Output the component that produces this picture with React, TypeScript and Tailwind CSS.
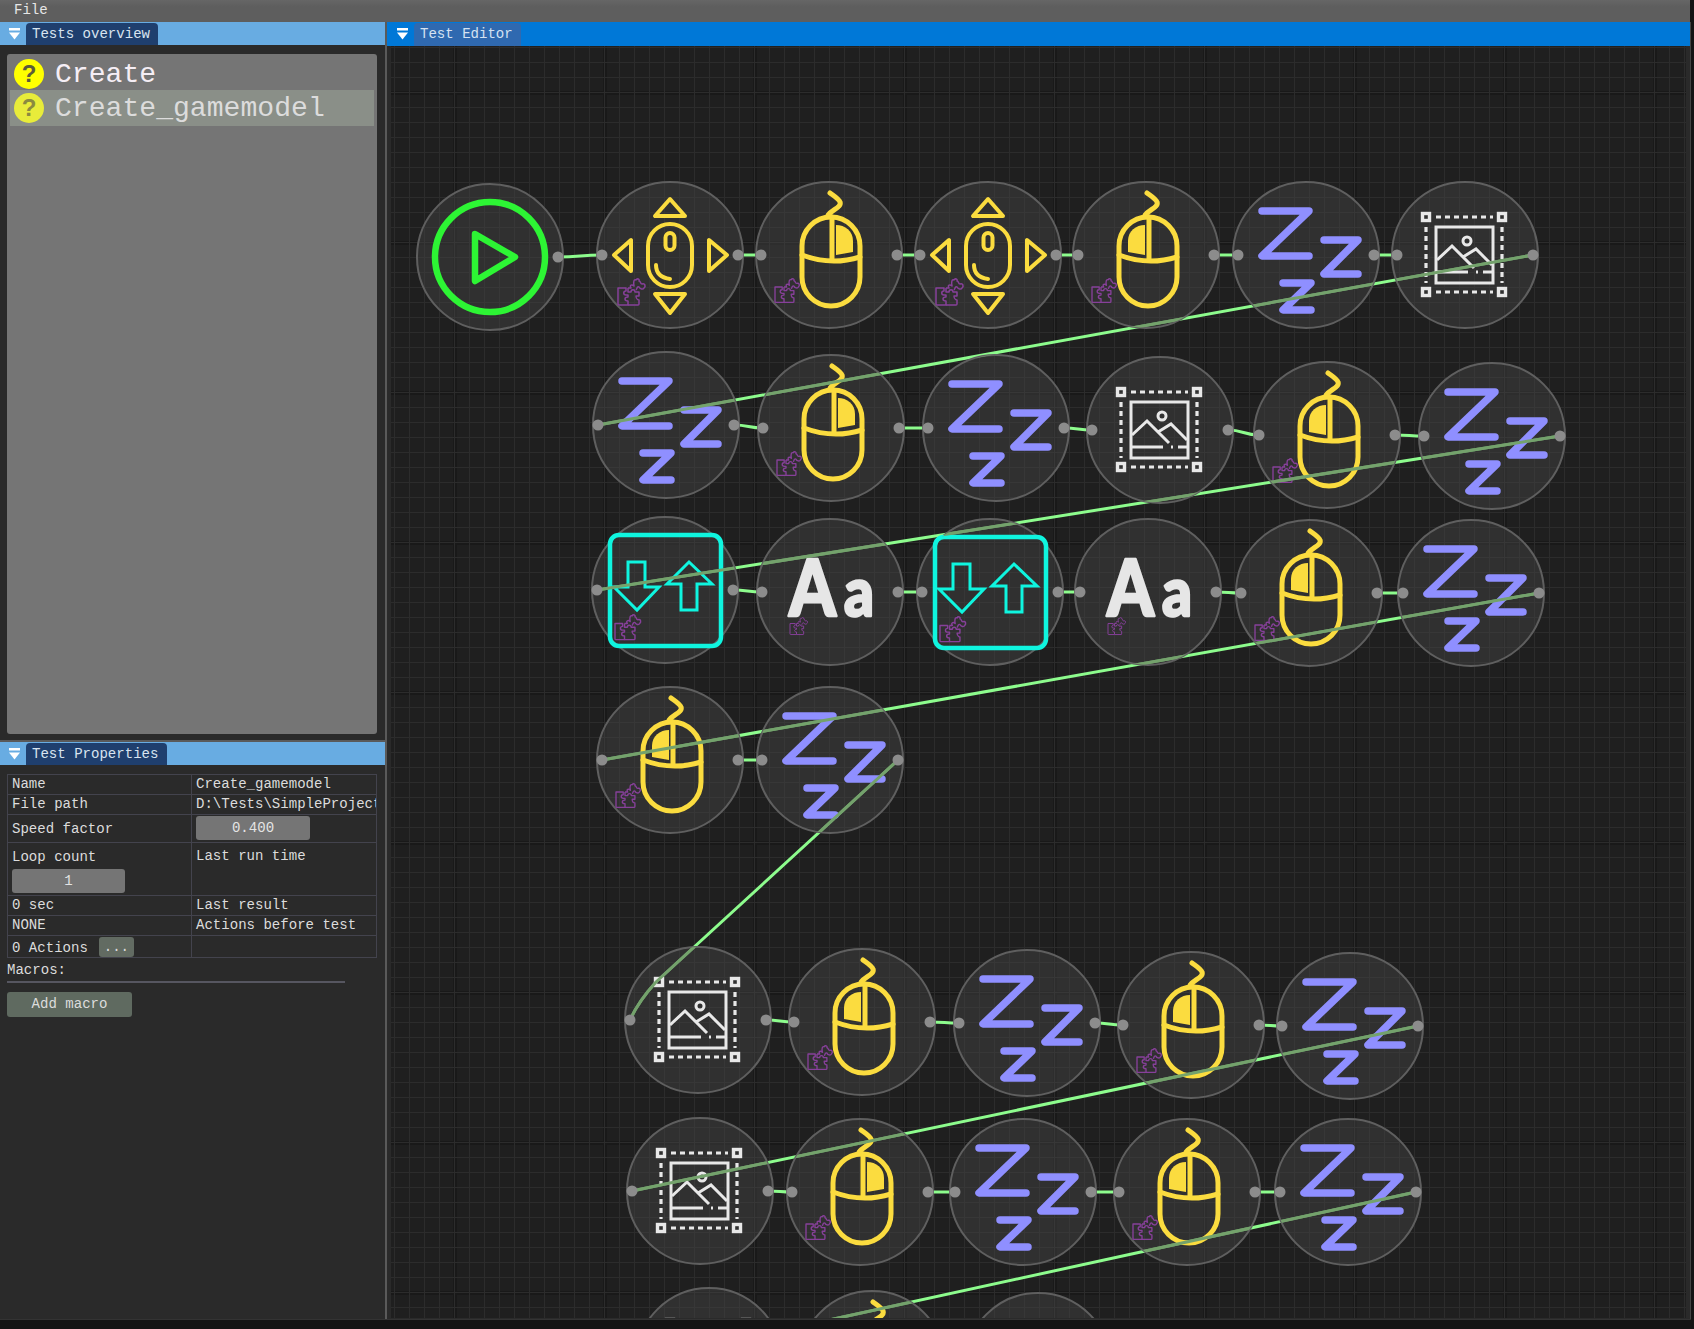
const OX = 391;
const OY = 46;
const GREEN = "#8dfc8d";
const YELLOW = "#fbdc3f";
const VIOLET = "#8f8fff";
const CYAN = "#0ff5df";
const WHITE = "#e8e8e8";

type Kind = "play" | "move" | "click" | "leftClick" | "zzz" | "image" | "keys" | "text";
type NodeData = { x: number; y: number; kind: Kind };

const n = (x: number, y: number, kind: Kind): NodeData => ({ x, y, kind });

// one array per row, in graph order
const rows: NodeData[][] = [
  [n(490, 257, "play"), n(670, 255, "move"), n(829, 255, "click"), n(988, 255, "move"), n(1146, 255, "leftClick"), n(1306, 255, "zzz"), n(1465, 255, "image")],
  [n(666, 425, "zzz"), n(831, 428, "click"), n(996, 428, "zzz"), n(1160, 430, "image"), n(1327, 435, "leftClick"), n(1492, 436, "zzz")],
  [n(665, 590, "keys"), n(830, 592, "text"), n(990, 592, "keys"), n(1148, 592, "text"), n(1309, 593, "leftClick"), n(1471, 593, "zzz")],
  [n(670, 760, "leftClick"), n(830, 760, "zzz")],
  [n(698, 1020, "image"), n(862, 1022, "leftClick"), n(1027, 1023, "zzz"), n(1191, 1025, "leftClick"), n(1350, 1026, "zzz")],
  [n(700, 1191, "image"), n(860, 1192, "click"), n(1023, 1192, "zzz"), n(1187, 1192, "leftClick"), n(1348, 1192, "zzz")],
  [n(709, 1361, "image"), n(872, 1364, "click"), n(1038, 1366, "zzz")],
];

const nodes = rows.flat();

function wirePath(a: NodeData, b: NodeData) {
  const x0 = a.x + 68 - OX;
  const y0 = a.y - OY;
  const x1 = b.x - 68 - OX;
  const y1 = b.y - OY;
  if (x1 < x0 - 100 && y1 - y0 > 200) {
    // the long one going back down to the image node bends at its end
    return `M${x0} ${y0} L${x1 + 26} ${y1 - 38} Q${x1 + 8} ${y1 - 18} ${x1} ${y1}`;
  }
  if (x1 < x0) return `M${x0} ${y0} L${x1} ${y1}`;
  const mid = (x0 + x1) / 2;
  return `M${x0} ${y0} C${mid} ${y0} ${mid} ${y1} ${x1} ${y1}`;
}

const wires: string[] = [];
rows.forEach((row, r) => {
  row.forEach((node, i) => {
    if (i > 0) wires.push(wirePath(row[i - 1], node));
  });
  if (r < rows.length - 1) wires.push(wirePath(row[row.length - 1], rows[r + 1][0]));
});

function Puzzle({ x, y, s = 1 }: { x: number; y: number; s?: number }) {
  return (
    <g transform={`translate(${x} ${y}) scale(${s})`} fill="none" stroke="#87409a" strokeWidth={1.5} strokeLinejoin="round">
      <path d="M0 10 H8 V13 C5 13 5 17 8 17 H10 V19 C6 19 6 23 10 23 V27 H1 Q0 27 0 26 Z" />
      <path d="M10 10 V14 H13 C13 11 17 11 17 14 H21 V18 H18 C18 22 21 22 21 22 V26 Q21 27 20 27 H10" />
      <path d="M10 10 H13 C11 7 14 6 16 8 C15 4 16 1 18 2 C19 0 22 1 21 3 C23 3 22 6 24 6 C27 5 28 8 26 10 C25 12 22 11 21 9 C19 8 19 11 18 12" />
    </g>
  );
}

function Zzz() {
  return (
    <g fill="none" stroke={VIOLET} strokeWidth={7.5} strokeLinecap="round" strokeLinejoin="round">
      <path d="M-44 -44 H3 L-44 1 H3" />
      <path d="M18 -15 H52 L18 19 H52" />
      <path d="M-23 28 H5 L-23 55 H5" />
    </g>
  );
}

function MouseClick({ left }: { left?: boolean }) {
  return (
    <g fill="none" stroke={YELLOW} strokeWidth={5} strokeLinecap="round" strokeLinejoin="round">
      <path d="M-1 -40 C4 -46 13 -48 11 -53 C10 -56 5 -59 1 -62" />
      <path d="M-27 -9 A29 29 0 0 1 31 -9 V22 A29 29 0 0 1 -27 22 Z" />
      <path d="M-27 0 Q2 11 31 2" />
      <path d="M3 -38 V5" />
      {left ? (
        <path d="M-1 -30 C-10 -30 -18 -24 -18 -14 V-3 L-1 0 Z" fill={YELLOW} stroke="none" />
      ) : (
        <path d="M7 -30 C16 -30 24 -24 24 -14 V-3 L7 0 Z" fill={YELLOW} stroke="none" />
      )}
    </g>
  );
}

function MouseMove() {
  return (
    <g fill="none" stroke={YELLOW} strokeWidth={4} strokeLinecap="round" strokeLinejoin="round">
      <path d="M-15 -39 H15 L0 -56 Z" />
      <path d="M-15 39 H15 L0 58 Z" />
      <path d="M-39 -15 V16 L-56 0 Z" />
      <path d="M39 -15 V16 L57 0 Z" />
      <rect x={-22} y={-31} width={44} height={63} rx={22} />
      <rect x={-4.5} y={-22} width={9} height={17} rx={4.5} />
      <path d="M-14 10 Q-14 22 0 24" />
    </g>
  );
}

function ImageFrame() {
  return (
    <g fill="none" stroke={WHITE} strokeWidth={3} strokeLinejoin="miter">
      <path d="M-29 -38 H28 M-29 37 H28 M-39 -28 V28 M37 -28 V28" strokeDasharray="5 4" strokeWidth={3.2} />
      {[[-39, -38], [37, -38], [-39, 37], [37, 37]].map(([x, y]) => (
        <rect key={`${x}${y}`} x={x - 3.5} y={y - 3.5} width={7} height={7} strokeWidth={3.4} />
      ))}
      <rect x={-29} y={-28} width={57} height={56} />
      <circle cx={2} cy={-14} r={4} />
      <path d="M-28 5 L-13 -9 L9 13 M-2 2 L11 -6 L27 10" />
      <path d="M-28 17 H3 M11 17 H13 M18 17 H27" />
    </g>
  );
}

function Keys() {
  return (
    <g fill="none" stroke={CYAN} strokeWidth={3}>
      <rect x={-55} y={-55} width={111} height={111} rx={9} strokeWidth={4.5} />
      <path d="M-37 -28 H-20 V-3 H-6 L-28 20 L-51 -3 H-37 Z" />
      <path d="M24 -28 L47 -6 H32 V20 H16 V-6 H2 Z" />
    </g>
  );
}

function Play() {
  return (
    <g fill="none" stroke="#2df534" strokeLinejoin="round">
      <circle r={55} strokeWidth={6.5} />
      <path d="M-15 -23 L25 0 L-15 24 Z" strokeWidth={6.5} />
    </g>
  );
}

function TextIcon() {
  return (
    <g fill="#e6e6e6" stroke="#e6e6e6" strokeWidth={2.5} strokeLinejoin="round" fontFamily="Lato, sans-serif" fontWeight={900}>
      <text x={-41} y={24} fontSize={78} textLength={47} lengthAdjust="spacingAndGlyphs">
        A
      </text>
      <text x={14} y={24} fontSize={68} textLength={30} lengthAdjust="spacingAndGlyphs">
        a
      </text>
    </g>
  );
}

function NodeIcon({ kind }: { kind: Kind }) {
  switch (kind) {
    case "play":
      return <Play />;
    case "zzz":
      return <Zzz />;
    case "image":
      return <ImageFrame />;
    case "move":
      return (
        <>
          <MouseMove />
          <Puzzle x={-52} y={23} />
        </>
      );
    case "click":
    case "leftClick":
      return (
        <>
          <MouseClick left={kind === "leftClick"} />
          <Puzzle x={-54} y={23} s={0.9} />
        </>
      );
    case "keys":
      return (
        <>
          <Keys />
          <Puzzle x={-50} y={24} s={0.95} />
        </>
      );
    case "text":
      return (
        <>
          <TextIcon />
          <Puzzle x={-40} y={25} s={0.65} />
        </>
      );
  }
}

function GraphNode({ node }: { node: NodeData }) {
  return (
    <div
      className="absolute h-[148px] w-[148px] rounded-full border-2 border-[#5f5f5f] bg-[#43434378]"
      style={{ left: node.x - OX - 74, top: node.y - OY - 74 }}
    >
      <svg viewBox="-74 -74 148 148" className="absolute left-[-2px] top-[-2px] h-[148px] w-[148px] overflow-visible">
        <NodeIcon kind={node.kind} />
      </svg>
    </div>
  );
}

function Canvas() {
  return (
    <div className="relative flex-1 overflow-hidden bg-[#1f1f1f] bg-[linear-gradient(to_right,#2c2c2c_1px,transparent_1px),linear-gradient(to_bottom,#2c2c2c_1px,transparent_1px),linear-gradient(to_right,#191919_4px,transparent_4px),linear-gradient(to_bottom,#191919_4px,transparent_4px)] bg-[size:15px_15px,15px_15px,150px_150px,150px_150px] bg-[position:3px_0,0_1px,62px_0,0_45px]">
      <svg className="absolute inset-0 h-full w-full" fill="none">
        {wires.map((d) => (
          <path key={d} d={d} stroke={GREEN} strokeWidth={3} />
        ))}
      </svg>
      {nodes.map((node) => (
        <GraphNode key={`${node.x}-${node.y}`} node={node} />
      ))}
      <svg className="absolute inset-0 h-full w-full" fill="none">
        <defs>
          <clipPath id="inside-nodes">
            {nodes.map((node) => (
              <circle key={`${node.x}-${node.y}`} cx={node.x - OX} cy={node.y - OY} r={73} />
            ))}
          </clipPath>
        </defs>
        <g clipPath="url(#inside-nodes)">
          {wires.map((d) => (
            <path key={d} d={d} stroke="#74a26c" strokeWidth={3} />
          ))}
        </g>
        {nodes.flatMap((node) =>
          [-68, 68].map((dx) =>
            node.kind === "play" && dx < 0 ? null : (
              <circle key={`${node.x}-${node.y}-${dx}`} cx={node.x + dx - OX} cy={node.y - OY} r={5.5} fill="#8c8c8c" />
            ),
          ),
        )}
      </svg>
    </div>
  );
}

function DockArrow() {
  return (
    <svg width="11" height="12" viewBox="0 0 11 12" className="shrink-0" fill="#fff">
      <rect x="0" y="0" width="11" height="2.5" />
      <path d="M0 4.5 H11 L5.5 11.5 Z" />
    </svg>
  );
}

function TabBar({ title, tabWidth, active }: { title: string; tabWidth: string; active?: boolean }) {
  return (
    <div className={`flex shrink-0 items-end ${active ? "h-[24px] bg-[#0078d7] pl-[10px]" : "h-[23px] bg-[#68ace2] pl-[9px]"}`}>
      <div className={`mr-[6px] ${active ? "mb-[6px]" : "mb-[5px]"}`}>
        <DockArrow />
      </div>
      <div
        className={`flex items-center rounded-t-[4px] pl-[6px] text-[14.06px] ${tabWidth} ${
          active ? "h-[23px] bg-[#2f69b0] text-[#d5e2f2]" : "h-[22px] bg-[#1f3f6e] text-[#d8e4f0]"
        }`}
      >
        <span className={active ? "" : "translate-y-px"}>{title}</span>
      </div>
    </div>
  );
}

function TestRow({ name, selected }: { name: string; selected?: boolean }) {
  return (
    <div className={`flex items-center text-[28.1px] ${selected ? "h-[36px] bg-[#8a8f88] text-[#dcdcdc]" : "h-[33px] text-[#f5eef5]"}`}>
      <div
        className={`ml-[4px] flex h-[30px] w-[30px] shrink-0 items-center justify-center rounded-full font-['Liberation_Sans',sans-serif] text-[24px] font-bold ${
          selected ? "bg-[#e8ec3a] text-[#8a8a40]" : "bg-[#ffff00] text-[#5c5c3a]"
        }`}
      >
        ?
      </div>
      <span className={`ml-[11px] ${selected ? "translate-y-px" : "translate-y-[2px]"}`}>{name}</span>
    </div>
  );
}

function PropRow({ h, left, right }: { h: string; left: React.ReactNode; right?: React.ReactNode }) {
  return (
    <div className={`flex border-b border-[#43434d] last:border-b-0 ${h}`}>
      <div className="w-[184px] shrink-0 overflow-hidden border-r border-[#43434d] pl-[4px]">{left}</div>
      <div className="min-w-0 flex-1 overflow-hidden whitespace-nowrap pl-[4px]">{right}</div>
    </div>
  );
}

function ValueBox({ value, width }: { value: string; width: string }) {
  return <div className={`flex h-[24px] items-center justify-center rounded-[3px] bg-[#757575] text-[#e4e4e4] ${width}`}>{value}</div>;
}

function Properties() {
  return (
    <div className="flex-1 bg-[#2a2a2a] pl-[7px] pr-[8px] pt-[9px] text-[14.06px] leading-[19px] text-[#dcdcdc]">
      <div className="h-[184px] border border-[#43434d]">
        <PropRow h="h-[20px]" left="Name" right="Create_gamemodel" />
        <PropRow h="h-[20px]" left="File path" right="D:\Tests\SimpleProject\Create_gamemodel" />
        <PropRow
          h="h-[28px]"
          left={<div className="pt-[5px]">Speed factor</div>}
          right={
            <div className="pt-[1px]">
              <ValueBox value="0.400" width="w-[114px]" />
            </div>
          }
        />
        <PropRow
          h="h-[53px]"
          left={
            <div className="pt-[5px]">
              Loop count
              <div className="pt-[2px]">
                <ValueBox value="1" width="w-[113px]" />
              </div>
            </div>
          }
          right={<div className="pt-[4px]">Last run time</div>}
        />
        <PropRow h="h-[20px]" left="0 sec" right="Last result" />
        <PropRow h="h-[20px]" left="NONE" right="Actions before test" />
        <PropRow
          h="h-[22px]"
          left={
            <div className="flex items-center">
              <span className="pt-[3px]">0 Actions</span>
              <div className="ml-[11px] flex h-[20px] w-[35px] items-center justify-center rounded-[3px] bg-[#626b62]">...</div>
            </div>
          }
        />
      </div>
      <div className="mt-[3px]">Macros:</div>
      <div className="mt-px h-[2px] w-[338px] bg-[#565660]" />
      <div className="mt-[9px] flex h-[25px] w-[125px] items-center justify-center rounded-[3px] bg-[#5f6a60]">Add macro</div>
    </div>
  );
}

export default function App() {
  return (
    <div className="flex h-[1329px] w-[1694px] flex-col overflow-hidden bg-[#141414] font-['Liberation_Mono',monospace]">
      <div className="flex h-[22px] w-[1690px] shrink-0 items-center bg-[#5f5f5f] bg-[linear-gradient(to_bottom,#666666,#5e5e5e_30%)] pl-[14px] text-[14.06px] text-[#e6e6e6]">
        File
      </div>
      <div className="flex h-[1297px] w-[1691px] shrink-0 border-r border-[#444444]">
        <div className="flex w-[385px] shrink-0 flex-col">
          <TabBar title="Tests overview" tabWidth="w-[132px]" />
          <div className="h-[695px] bg-[#2a2a2a] pb-[6px] pl-[7px] pr-[8px] pt-[9px]">
            <div className="h-full rounded-[3px] bg-[#757575] px-[3px] pt-[3px]">
              <TestRow name="Create" />
              <TestRow name="Create_gamemodel" selected />
            </div>
          </div>
          <div className="h-[2px] shrink-0 bg-[#5a5a5a]" />
          <TabBar title="Test Properties" tabWidth="w-[141px]" />
          <Properties />
        </div>
        <div className="w-[2px] shrink-0 bg-[#5a5a5a]" />
        <div className="flex min-w-0 flex-1 flex-col">
          <TabBar title="Test Editor" tabWidth="w-[107px]" active />
          <div className="flex min-h-0 flex-1 bg-[#2a2a2a] px-[4px] pb-px">
            <Canvas />
          </div>
        </div>
      </div>
      <div className="h-px w-[1691px] bg-[#333333]" />
    </div>
  );
}
